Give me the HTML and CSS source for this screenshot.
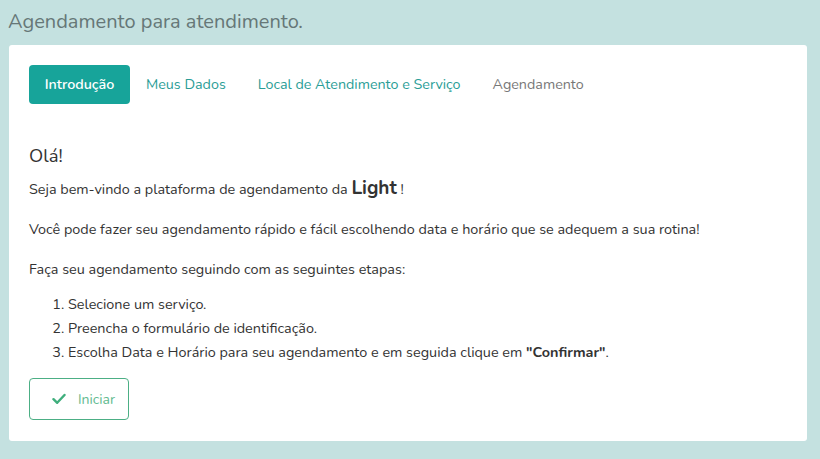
FILE: index.html
```html
<!DOCTYPE html>
<html lang="pt-BR">
<head>
<meta charset="utf-8">
<title>Agendamento para atendimento.</title>
<link rel="stylesheet" href="styles.css">
</head>
<body>
<h1 class="page-title">Agendamento para atendimento.</h1>
<main class="card">
  <nav class="tabs">
    <a class="tab active">Introdução</a>
    <a class="tab">Meus Dados</a>
    <a class="tab">Local de Atendimento e Serviço</a>
    <a class="tab disabled">Agendamento</a>
  </nav>
  <section class="intro">
    <h2 class="greeting">Olá!</h2>
    <p class="line">Seja bem-vindo a plataforma de agendamento da <span class="brand">Light</span> !</p>
    <p class="line">Você pode fazer seu agendamento rápido e fácil escolhendo data e horário que se adequem a sua rotina!</p>
    <p class="line">Faça seu agendamento seguindo com as seguintes etapas:</p>
    <ol class="steps">
      <li>Selecione um serviço.</li>
      <li>Preencha o formulário de identificação.</li>
      <li>Escolha Data e Horário para seu agendamento e em seguida clique em <b>"Confirmar"</b>.</li>
    </ol>
    <button class="start">
      <svg class="check" width="14" height="12" viewBox="0 0 14 12"><path d="M1.5 6.2 L5.2 9.8 L12.5 2" fill="none" stroke="#3fae7c" stroke-width="2.4" stroke-linecap="round" stroke-linejoin="round"/></svg>
      <span>Iniciar</span>
    </button>
  </section>
</main>
</body>
</html>
```

FILE: styles.css
```css
* { box-sizing: border-box; }
html, body { margin: 0; padding: 0; }
body {
  background: #c4e1e0;
  font-family: "Nunito", "Lato", "Open Sans", sans-serif;
  color: #333;
  width: 820px;
  height: 459px;
  overflow: hidden;
}
.page-title {
  margin: 0;
  padding: 8px 0 0 8px;
  height: 45px;
  font-size: 20px;
  font-weight: 400;
  color: #667777;
  line-height: 28px;
}
.card {
  margin: 0 13px 0 9px;
  height: 396px;
  background: #fff;
  border-radius: 3px;
  padding: 20px 20px;
}
.tabs {
  display: flex;
  align-items: center;
  height: 39px;
}
.tab {
  display: flex;
  align-items: center;
  height: 39px;
  padding: 0 16px;
  font-size: 14.3px;
  color: #2a9d96;
  border-radius: 4px;
}
.tab.active {
  width: 101px;
  justify-content: center;
  padding: 0;
  margin-right: 16px;
  background: #17a49a;
  color: #fff;
  font-weight: 600;
}
.tab.active + .tab { padding-left: 0; }
.tab.disabled { color: #777; }
.intro { padding-top: 40px; }
.greeting {
  margin: 0 0 10px;
  font-size: 18.5px;
  font-weight: 400;
  line-height: 24px;
  color: #333;
}
.line {
  margin: 0 0 20px;
  font-size: 14.4px;
  line-height: 20px;
}
.brand { font-size: 19px; font-weight: 700; }
.steps {
  margin: -7px 0 14px;
  padding-left: 39px;
  font-size: 14.4px;
  line-height: 24px;
}
.start {
  display: flex;
  align-items: center;
  gap: 12px;
  width: 100px;
  height: 42px;
  padding: 0 0 0 22px;
  background: #fff;
  border: 1px solid #4caf85;
  border-radius: 4px;
  font-family: inherit;
  font-size: 14px;
  color: #62bb90;
}
.check { flex-shrink: 0; }
```
